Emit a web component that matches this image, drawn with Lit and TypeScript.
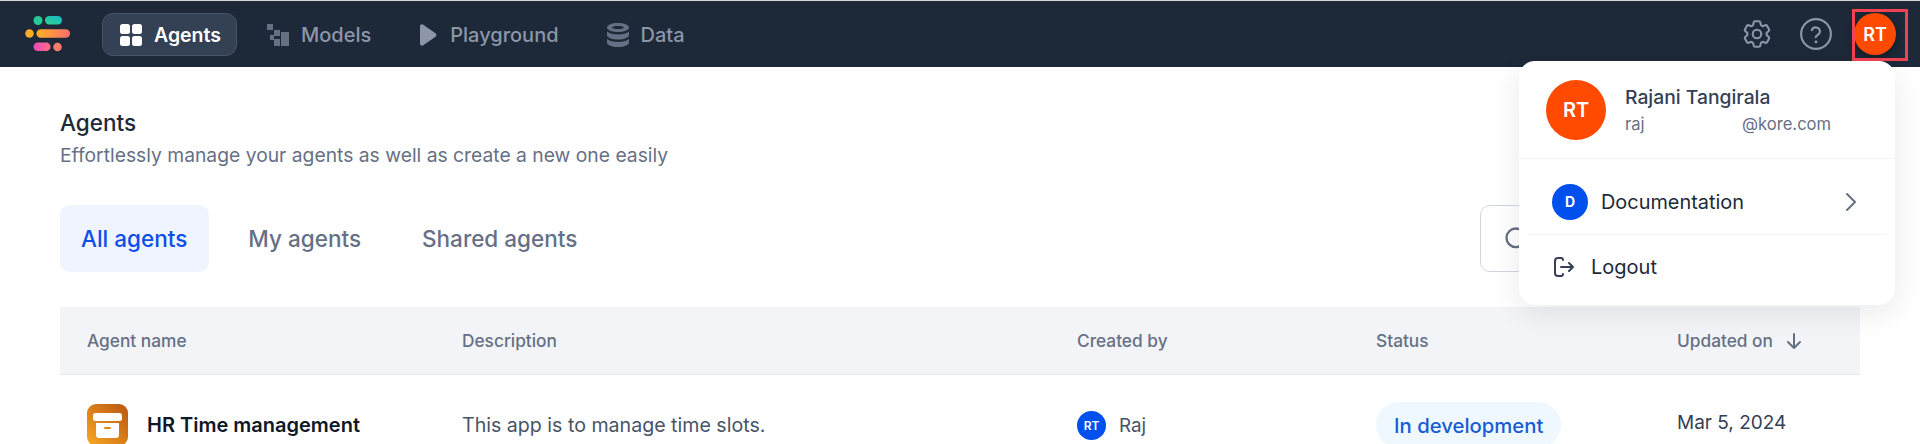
import { LitElement, html, css } from "lit";
import { customElement } from "lit/decorators.js";

@customElement("app-root")
export class AppRoot extends LitElement {
  static styles = css`
    :host {
      display: block;
      position: relative;
      height: 444px;
      overflow: hidden;
      background: #fff;
      font-family: Inter, "Liberation Sans", sans-serif;
      border-top: 1px solid #d6d6d2;
      box-sizing: border-box;
    }

    .topbar {
      height: 66px;
      background: #1d2939;
      display: flex;
      align-items: center;
      padding: 0 24px 0 25px;
    }

    .logo {
      display: block;
      margin-right: 32px;
    }

    .nav {
      display: flex;
      align-items: center;
    }

    .nav-item {
      display: flex;
      align-items: center;
      gap: 12px;
      height: 43px;
      box-sizing: border-box;
      padding: 2px 15px 0;
      border-radius: 11px;
      border: 1px solid transparent;
      font-size: 20px;
      font-weight: 500;
      color: #8c96a8;
      margin-right: 14px;
    }

    .nav-item.active {
      color: #fff;
      font-size: 19.500px;
      font-weight: 600;
      background: #344054;
      border-color: #475467;
      padding: 2px 15px 0 17px;
    }

    .nav-item.play {
      padding-left: 17px;
      gap: 13px;
      margin-right: 16px;
    }

    .top-actions {
      margin-left: auto;
      display: flex;
      align-items: center;
    }

    .gear {
      margin-right: 25px;
    }

    .help {
      margin-right: 21px;
    }

    .avatar {
      border-radius: 50%;
      background: #ff4a00;
      color: #fff;
      display: flex;
      align-items: center;
      justify-content: center;
      font-weight: 600;
    }

    .avatar.top {
      width: 42px;
      height: 42px;
      font-size: 18px;
      box-shadow: 0 2px 10px rgba(0, 0, 0, 0.4);
    }

    .outline {
      position: absolute;
      left: 1852px;
      top: 8px;
      width: 56px;
      height: 52px;
      box-sizing: border-box;
      border: 3px solid #f04250;
    }

    .page {
      padding: 0 60px;
    }

    .title {
      margin-top: 39px;
      font-size: 22.500px;
      line-height: 34px;
      font-weight: 500;
      color: #1d2939;
    }

    .subtitle {
      font-size: 19.300px;
      line-height: 30px;
      color: #667085;
    }

    .tabs-row {
      margin-top: 35px;
      display: flex;
      justify-content: space-between;
    }

    .tabs {
      display: flex;
    }

    .tab {
      height: 67px;
      display: flex;
      align-items: center;
      padding: 0 22px 0 21px;
      border-radius: 10px;
      font-size: 22.500px;
      font-weight: 500;
      color: #667085;
      margin-right: 18px;
    }

    .tab.active {
      background: #eff4ff;
      color: #0d4eea;
    }

    .search {
      width: 380px;
      height: 67px;
      box-sizing: border-box;
      border: 1px solid #d0d5dd;
      border-radius: 10px;
      display: flex;
      align-items: center;
      padding-left: 22px;
    }

    .table {
      margin-top: 35px;
    }

    .cols {
      display: grid;
      grid-template-columns: 375px 615px 299px 301px 1fr;
      padding-left: 27px;
      align-items: center;
    }

    .head {
      height: 68px;
      background: #f2f4f7;
      border-bottom: 1px solid #eaecf0;
      box-sizing: border-box;
      font-size: 17.300px;
      font-weight: 500;
      color: #667085;
    }

    .sort {
      display: flex;
      align-items: center;
      gap: 12px;
    }

    .row {
      padding-top: 27px;
      font-size: 19.600px;
      color: #475467;
    }

    .name {
      display: flex;
      align-items: center;
      gap: 19px;
      font-size: 20px;
      font-weight: 600;
      color: #101828;
    }

    .app-icon {
      display: block;
      flex: none;
    }

    .creator {
      display: flex;
      align-items: center;
      gap: 13px;
      font-size: 18.800px;
    }

    .avatar.small {
      width: 29px;
      height: 29px;
      background: #0050ee;
      font-size: 12px;
    }

    .pill {
      justify-self: start;
      height: 46px;
      display: flex;
      align-items: center;
      padding: 0 18px;
      border-radius: 23px;
      background: #eff8ff;
      color: #175cd3;
      font-size: 20.300px;
      font-weight: 500;
    }

    .date {
      color: #344054;
      font-size: 19px;
      margin-top: -5px;
    }

    .menu {
      position: absolute;
      left: 1519px;
      top: 60px;
      width: 376px;
      height: 244px;
      box-sizing: border-box;
      background: #fff;
      border-radius: 16px;
      box-shadow: 0 8px 30px rgba(16, 24, 40, 0.09);
    }

    .profile {
      display: flex;
      align-items: center;
      gap: 19px;
      height: 98px;
      box-sizing: border-box;
      padding-left: 27px;
      border-bottom: 1px solid #f2f4f7;
    }

    .avatar.big {
      width: 60px;
      height: 60px;
      font-size: 20px;
    }

    .user-name {
      font-size: 19.300px;
      line-height: 26px;
      font-weight: 500;
      color: #344054;
      margin-top: 2px;
    }

    .user-mail {
      font-size: 16.600px;
      line-height: 28px;
      color: #667085;
      display: flex;
    }

    .user-mail span:first-child {
      width: 117px;
    }

    .doc {
      margin: 0 9px;
      height: 76px;
      box-sizing: border-box;
      padding: 10px 29px 0 24px;
      display: flex;
      align-items: center;
      gap: 13px;
      border-bottom: 1px solid #f2f4f7;
      font-size: 19.900px;
      color: #1d2939;
    }

    .avatar.doc-badge {
      width: 36px;
      height: 36px;
      background: #0050ee;
      font-size: 14px;
      font-weight: 700;
    }

    .chevron {
      margin-left: auto;
    }

    .logout {
      display: flex;
      align-items: center;
      gap: 17px;
      padding: 20px 0 0 35px;
      font-size: 20px;
      color: #1d2939;
    }
  `;

  private navIcon(kind: string) {
    if (kind === "agents") {
      return html`<svg width="22" height="22" viewBox="0 0 22 22" fill="#fff">
        <rect x="0" y="0" width="10" height="10" rx="2.5"></rect>
        <rect x="12" y="0" width="10" height="10" rx="2.5"></rect>
        <rect x="0" y="12" width="10" height="10" rx="2.5"></rect>
        <rect x="12" y="12" width="10" height="10" rx="2.5"></rect>
      </svg>`;
    }
    if (kind === "models") {
      return html`<svg width="22" height="22" viewBox="0 0 22 22" fill="#667085">
        <rect x="0" y="0" width="6" height="6"></rect>
        <rect x="7" y="6" width="6" height="6"></rect>
        <rect x="7" y="15" width="6" height="7"></rect>
        <path d="M14 8h8v14h-8z"></path>
        <rect x="3" y="11" width="4" height="5"></rect>
      </svg>`;
    }
    if (kind === "play") {
      return html`<svg width="18" height="22" viewBox="0 0 18 22" fill="#8c96a8">
        <path d="M1 2.2c0-1.5 1.6-2.4 2.9-1.6l12.6 8.7c1.2.8 1.2 2.6 0 3.4L3.9 21.4C2.6 22.200 1 21.300 1 19.800z"></path>
      </svg>`;
    }
    return html`<svg width="22" height="24" viewBox="0 0 22 24" fill="#667085">
      <path d="M11 0c6 0 11 1.800 11 4.500S17 9 11 9 0 7.200 0 4.500 5 0 11 0zm0 3c-3.500 0-6 .7-6 1.500S7.500 6 11 6s6-.7 6-1.500S14.500 3 11 3z"></path>
      <path d="M0 8.500C2 10.500 6.500 11.500 11 11.500s9-1 11-3V12c0 2.700-5 4.500-11 4.500S0 14.700 0 12z"></path>
      <path d="M0 16c2 2 6.500 3 11 3s9-1 11-3v3.500C22 22.200 17 24 11 24S0 22.200 0 19.500z"></path>
    </svg>`;
  }

  render() {
    return html`
      <header class="topbar">
        <svg class="logo" width="45" height="36" viewBox="0 0 45 36">
          <defs>
            <linearGradient id="lg1" x1="0" x2="1" y1="1" y2="0">
              <stop offset="0" stop-color="#2fd28b"></stop>
              <stop offset="1" stop-color="#16b8c8"></stop>
            </linearGradient>
            <linearGradient id="lg2" x1="0" x2="1" y1="0" y2="0">
              <stop offset="0" stop-color="#fdb022"></stop>
              <stop offset="1" stop-color="#fd6f6f"></stop>
            </linearGradient>
            <linearGradient id="lg3" x1="0" x2="1" y1="0" y2="0">
              <stop offset="0" stop-color="#ee46bc"></stop>
              <stop offset="1" stop-color="#fb6f84"></stop>
            </linearGradient>
          </defs>
          <circle cx="13" cy="4.500" r="4.500" fill="#22cc96"></circle>
          <rect x="20" y="0" width="17" height="8.500" rx="4.250" fill="url(#lg1)"></rect>
          <circle cx="4.500" cy="17.500" r="4.250" fill="#fdac2a"></circle>
          <rect x="11.500" y="13.300" width="33.500" height="8.500" rx="4.250" fill="url(#lg2)"></rect>
          <rect x="8.500" y="26.500" width="17" height="8.500" rx="4.250" fill="url(#lg3)"></rect>
          <circle cx="32.500" cy="31" r="4.250" fill="#fb7c69"></circle>
        </svg>
        <nav class="nav">
          <div class="nav-item active">${this.navIcon("agents")}Agents</div>
          <div class="nav-item">${this.navIcon("models")}Models</div>
          <div class="nav-item play">${this.navIcon("play")}Playground</div>
          <div class="nav-item">${this.navIcon("data")}Data</div>
        </nav>
        <div class="top-actions">
          <svg class="gear" width="34" height="34" viewBox="0 0 24 24" fill="none" stroke="#8c96a8" stroke-width="1.500" stroke-linecap="round" stroke-linejoin="round">
            <path d="M9.594 3.94c.09-.542.56-.94 1.11-.94h2.593c.55 0 1.02.398 1.11.94l.213 1.281c.063.374.313.686.645.87.074.04.147.083.22.127.324.196.72.257 1.075.124l1.217-.456a1.125 1.125 0 011.37.49l1.296 2.247a1.125 1.125 0 01-.26 1.431l-1.003.827c-.293.24-.438.613-.431.992a6.759 6.759 0 010 .255c-.007.378.138.75.43.99l1.005.828c.424.35.534.954.26 1.43l-1.298 2.247a1.125 1.125 0 01-1.369.491l-1.217-.456c-.355-.133-.75-.072-1.076.124a6.57 6.57 0 01-.22.128c-.331.183-.581.495-.644.869l-.213 1.28c-.09.543-.56.941-1.11.941h-2.594c-.55 0-1.02-.398-1.11-.94l-.213-1.281c-.062-.374-.312-.686-.644-.87a6.52 6.52 0 01-.22-.127c-.325-.196-.72-.257-1.076-.124l-1.217.456a1.125 1.125 0 01-1.369-.49l-1.297-2.247a1.125 1.125 0 01.26-1.431l1.004-.827c.292-.24.437-.613.43-.992a6.932 6.932 0 010-.255c.007-.378-.138-.75-.43-.99l-1.004-.828a1.125 1.125 0 01-.26-1.43l1.297-2.247a1.125 1.125 0 011.37-.491l1.216.456c.356.133.751.072 1.076-.124.072-.044.146-.087.22-.128.332-.183.582-.495.644-.869l.214-1.281z"></path>
            <circle cx="12" cy="12" r="3"></circle>
          </svg>
          <svg class="help" width="34" height="34" viewBox="0 0 24 24" fill="none" stroke="#8c96a8" stroke-width="1.500" stroke-linecap="round">
            <circle cx="12" cy="12" r="10.500"></circle>
            <path d="M9 9.300a3 3 0 0 1 5.800 1c0 2-3 2.700-3 4"></path>
            <path d="M12 17.500v.1" stroke-width="2"></path>
          </svg>
          <div class="avatar top">RT</div>
        </div>
      </header>
      <div class="outline"></div>

      <main class="page">
        <div class="title">Agents</div>
        <div class="subtitle">Effortlessly manage your agents as well as create a new one easily</div>
        <div class="tabs-row">
          <div class="tabs">
            <div class="tab active">All agents</div>
            <div class="tab">My agents</div>
            <div class="tab">Shared agents</div>
          </div>
          <div class="search">
            <svg width="28" height="28" viewBox="0 0 24 24" fill="none" stroke="#667085" stroke-width="2">
              <circle cx="11" cy="11" r="8"></circle>
            </svg>
          </div>
        </div>
        <section class="table">
          <div class="cols head">
            <div>Agent name</div>
            <div>Description</div>
            <div>Created by</div>
            <div>Status</div>
            <div class="sort">
              Updated on
              <svg width="18" height="18" viewBox="0 0 18 18" fill="none" stroke="#667085" stroke-width="2" stroke-linecap="round" stroke-linejoin="round">
                <path d="M9 2v14M3 10l6 6 6-6"></path>
              </svg>
            </div>
          </div>
          <div class="cols row">
            <div class="name">
              <svg class="app-icon" width="41" height="42" viewBox="0 0 41 42">
                <defs>
                  <linearGradient id="box" x1="0" x2="1" y1="1" y2="0">
                    <stop offset="0" stop-color="#f9a825"></stop>
                    <stop offset="1" stop-color="#b9560f"></stop>
                  </linearGradient>
                </defs>
                <rect width="41" height="42" rx="9" fill="url(#box)"></rect>
                <rect x="6" y="9" width="29" height="8" rx="2.500" fill="#fff"></rect>
                <path d="M9 19h23v12a3 3 0 0 1-3 3H12a3 3 0 0 1-3-3z" fill="#fff"></path>
                <rect x="17" y="23" width="7" height="2" rx="1" fill="#e08a1e"></rect>
              </svg>
              HR Time management
            </div>
            <div>This app is to manage time slots.</div>
            <div class="creator"><div class="avatar small">RT</div>Raj</div>
            <div class="pill">In development</div>
            <div class="date">Mar 5, 2024</div>
          </div>
        </section>
      </main>

      <aside class="menu">
        <div class="profile">
          <div class="avatar big">RT</div>
          <div>
            <div class="user-name">Rajani Tangirala</div>
            <div class="user-mail"><span>raj</span><span>@kore.com</span></div>
          </div>
        </div>
        <div class="doc">
          <div class="avatar doc-badge">D</div>
          Documentation
          <svg class="chevron" width="12" height="20" viewBox="0 0 12 20" fill="none" stroke="#667085" stroke-width="2" stroke-linecap="round" stroke-linejoin="round">
            <path d="M2 2l8 8-8 8"></path>
          </svg>
        </div>
        <div class="logout">
          <svg width="20" height="20" viewBox="0 0 20 20" fill="none" stroke="#344054" stroke-width="2" stroke-linecap="round" stroke-linejoin="round">
            <path d="M9 3V3a2 2 0 0 0-2-2H4a3 3 0 0 0-3 3v12a3 3 0 0 0 3 3h3a2 2 0 0 0 2-2"></path>
            <path d="M7 10h12M15 6l4 4-4 4"></path>
          </svg>
          Logout
        </div>
      </aside>
    `;
  }
}
